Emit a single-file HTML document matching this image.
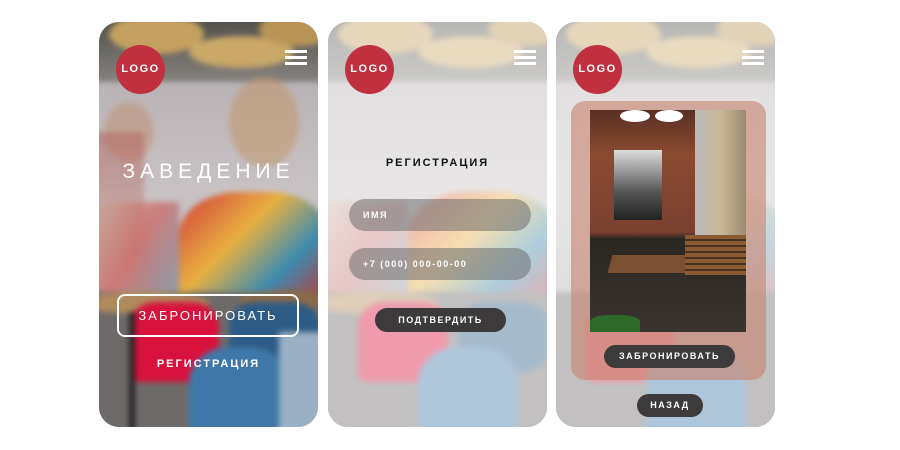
<!DOCTYPE html>
<html><head><meta charset="utf-8"><style>
*{margin:0;padding:0;box-sizing:border-box}
body{width:900px;height:450px;background:#fff;position:relative;overflow:hidden;font-family:"Liberation Sans","DejaVu Sans",sans-serif}
.card{position:absolute;top:22px;width:219px;height:405px;border-radius:20px;overflow:hidden;background:#bdb6b8}
.bg{position:absolute;inset:-10px;filter:blur(3px)}
.bg div{position:absolute}
.ov{position:absolute;inset:0;background:rgba(255,255,255,.58)}
.logo{position:absolute;left:17px;top:23px;width:49px;height:49px;border-radius:50%;background:#c0303e;color:#fff;font-weight:bold;font-size:11px;letter-spacing:1.5px;text-align:center;line-height:49px}
.ham{position:absolute;left:186px;top:28px;width:22px;height:15px;border-top:3px solid #fff;border-bottom:3px solid #fff}
.ham:after{content:"";position:absolute;left:0;right:0;top:3px;height:3px;background:#fff}
.t{position:absolute;left:0;right:0;text-align:center;font-weight:bold;letter-spacing:2px}
.pill{position:absolute;border-radius:12px;color:#fff;font-weight:bold;font-size:9px;letter-spacing:1.5px;text-align:center}
</style></head><body>

<div class="card" style="left:99px">
 <div class="bg">
  <div style="left:0;top:0;width:240px;height:80px;background:linear-gradient(#4a4a44,#8e8a86)"></div>
  <div style="left:0;top:70px;width:240px;height:220px;background:linear-gradient(#b9b3b6,#c8c2c4 50%,#b8b0b0)"></div>
  <div style="left:20px;top:2px;width:95px;height:40px;border-radius:50%;background:#c4a060"></div>
  <div style="left:100px;top:24px;width:105px;height:32px;border-radius:50%;background:#c9a868"></div>
  <div style="left:170px;top:0;width:80px;height:34px;border-radius:50%;background:#b89456"></div>
  <div style="left:140px;top:65px;width:70px;height:90px;border-radius:50%;background:#c29a70;opacity:.6"></div>
  <div style="left:15px;top:90px;width:50px;height:60px;border-radius:50%;background:#c09070;opacity:.5"></div>
  <div style="left:0;top:120px;width:55px;height:170px;background:linear-gradient(#b05050,#d0c0b0);opacity:.45"></div>
  <div style="left:90px;top:180px;width:150px;height:110px;border-radius:40% 40% 0 0;background:linear-gradient(135deg,#d23a3a,#e8b040 40%,#3c8cb0 70%,#c83030)"></div>
  <div style="left:0;top:190px;width:90px;height:100px;background:linear-gradient(120deg,#c8b89a,#d04848,#6090a8);opacity:.55"></div>
  <div style="left:0;top:280px;width:240px;height:140px;background:#6e6a6a"></div>
  <div style="left:-10px;top:280px;width:130px;height:22px;border-radius:50%;background:#b08a5c"></div>
  <div style="left:150px;top:278px;width:100px;height:20px;border-radius:50%;background:#8a6a4a"></div>
  <div style="left:40px;top:290px;width:90px;height:80px;border-radius:30% 30% 10% 10%;background:#d8123c"></div>
  <div style="left:140px;top:290px;width:90px;height:70px;border-radius:30%;background:#2c5c86"></div>
  <div style="left:100px;top:335px;width:100px;height:90px;border-radius:40% 40% 0 0;background:#3f78a8"></div>
  <div style="left:190px;top:320px;width:50px;height:100px;background:#9ab0c4"></div>
  <div style="left:40px;top:300px;width:6px;height:120px;background:#222"></div>
 </div>
 <div class="logo">LOGO</div><div class="ham"></div>
 <div class="t" style="top:138px;color:#fff;font-size:21px;letter-spacing:5px;font-weight:normal">ЗАВЕДЕНИЕ</div>
 <div style="position:absolute;left:18px;top:272px;width:182px;height:43px;border:2px solid #fff;border-radius:8px;color:#fff;text-align:center;line-height:39px;font-size:13px;letter-spacing:2px">ЗАБРОНИРОВАТЬ</div>
 <div class="t" style="top:336px;color:#fff;font-size:11px">РЕГИСТРАЦИЯ</div>
</div>

<div class="card" style="left:328px">
 <div class="bg">
  <div style="left:0;top:0;width:240px;height:80px;background:linear-gradient(#4a4a44,#8e8a86)"></div>
  <div style="left:0;top:70px;width:240px;height:220px;background:linear-gradient(#b9b3b6,#c8c2c4 50%,#b8b0b0)"></div>
  <div style="left:20px;top:2px;width:95px;height:40px;border-radius:50%;background:#c4a060"></div>
  <div style="left:100px;top:24px;width:105px;height:32px;border-radius:50%;background:#c9a868"></div>
  <div style="left:170px;top:0;width:80px;height:34px;border-radius:50%;background:#b89456"></div>
  <div style="left:90px;top:180px;width:150px;height:110px;border-radius:40% 40% 0 0;background:linear-gradient(135deg,#d23a3a,#e8b040 40%,#3c8cb0 70%,#c83030)"></div>
  <div style="left:0;top:190px;width:90px;height:100px;background:linear-gradient(120deg,#c8b89a,#d04848,#6090a8);opacity:.55"></div>
  <div style="left:0;top:280px;width:240px;height:140px;background:#6e6a6a"></div>
  <div style="left:-10px;top:280px;width:130px;height:22px;border-radius:50%;background:#b08a5c"></div>
  <div style="left:40px;top:290px;width:90px;height:80px;border-radius:30% 30% 10% 10%;background:#d8123c"></div>
  <div style="left:140px;top:290px;width:90px;height:70px;border-radius:30%;background:#2c5c86"></div>
  <div style="left:100px;top:335px;width:100px;height:90px;border-radius:40% 40% 0 0;background:#3f78a8"></div>
 </div>
 <div class="ov"></div>
 <div class="logo">LOGO</div><div class="ham"></div>
 <div class="t" style="top:135px;color:#111;font-size:11px">РЕГИСТРАЦИЯ</div>
 <div class="pill" style="left:21px;top:177px;width:182px;height:32px;border-radius:16px;background:rgba(110,110,110,.55);text-align:left;padding-left:14px;line-height:32px">ИМЯ</div>
 <div class="pill" style="left:21px;top:226px;width:182px;height:32px;border-radius:16px;background:rgba(110,110,110,.55);text-align:left;padding-left:14px;line-height:32px">+7 (000) 000-00-00</div>
 <div class="pill" style="left:47px;top:286px;width:131px;height:24px;background:#3c3a3a;line-height:24px">ПОДТВЕРДИТЬ</div>
</div>

<div class="card" style="left:556px">
 <div class="bg">
  <div style="left:0;top:0;width:240px;height:80px;background:linear-gradient(#4a4a44,#8e8a86)"></div>
  <div style="left:0;top:70px;width:240px;height:220px;background:linear-gradient(#b9b3b6,#c8c2c4 50%,#b8b0b0)"></div>
  <div style="left:20px;top:2px;width:95px;height:40px;border-radius:50%;background:#c4a060"></div>
  <div style="left:100px;top:24px;width:105px;height:32px;border-radius:50%;background:#c9a868"></div>
  <div style="left:170px;top:0;width:80px;height:34px;border-radius:50%;background:#b89456"></div>
  <div style="left:90px;top:180px;width:150px;height:110px;border-radius:40% 40% 0 0;background:linear-gradient(135deg,#d23a3a,#e8b040 40%,#3c8cb0 70%,#c83030);opacity:.6"></div>
  <div style="left:0;top:280px;width:240px;height:140px;background:#6e6a6a"></div>
  <div style="left:40px;top:290px;width:90px;height:80px;border-radius:30% 30% 10% 10%;background:#d8123c"></div>
  <div style="left:100px;top:335px;width:100px;height:90px;border-radius:40% 40% 0 0;background:#3f78a8"></div>
 </div>
 <div class="ov"></div>
 <div class="logo">LOGO</div><div class="ham"></div>
 <div style="position:absolute;left:15px;top:79px;width:195px;height:279px;border-radius:14px;background:rgba(200,130,110,.6)"></div>
 <div style="position:absolute;left:34px;top:88px;width:156px;height:222px;background:linear-gradient(#5a3024,#8a4a30 20%,#7a4030 55%,#2a2622 58%,#3a3430 100%);overflow:hidden">
  <div style="position:absolute;left:24px;top:40px;width:48px;height:70px;background:linear-gradient(#ddd,#555 60%,#222)"></div>
  <div style="position:absolute;left:105px;top:0;width:51px;height:150px;background:linear-gradient(90deg,#bbb,#c8b898,#9a8a70)"></div>
  <div style="position:absolute;left:30px;top:0;width:30px;height:12px;border-radius:50%;background:#fff"></div>
  <div style="position:absolute;left:65px;top:0;width:28px;height:12px;border-radius:50%;background:#fff"></div>
  <div style="position:absolute;left:20px;top:145px;width:105px;height:18px;background:#7a5030;transform:skewX(-15deg)"></div>
  <div style="position:absolute;left:95px;top:125px;width:61px;height:40px;background:repeating-linear-gradient(#8a5a30 0 4px,#4a3020 4px 6px)"></div>
  <div style="position:absolute;left:0;top:205px;width:50px;height:17px;background:#2e6a2a;border-radius:40% 40% 0 0"></div>
 </div>
 <div class="pill" style="left:48px;top:323px;width:131px;height:23px;background:#3c3a3a;line-height:23px">ЗАБРОНИРОВАТЬ</div>
 <div class="pill" style="left:81px;top:372px;width:66px;height:23px;background:#3c3a3a;line-height:23px">НАЗАД</div>
</div>
</body></html>
